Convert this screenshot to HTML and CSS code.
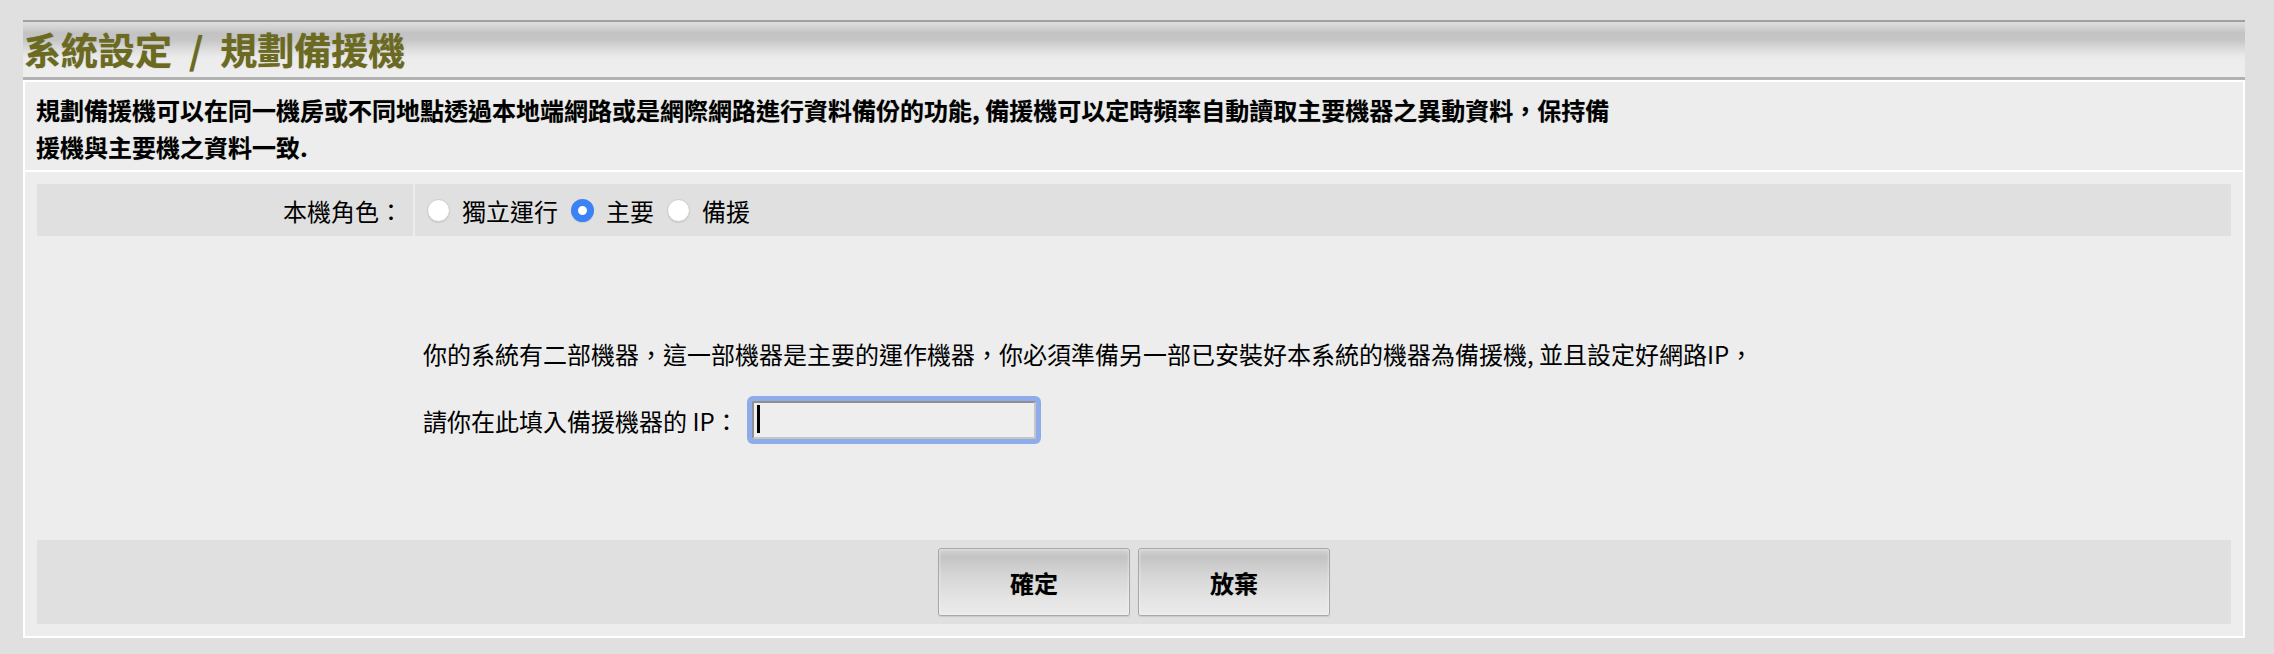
FILE: index.html
```html
<!DOCTYPE html>
<html lang="zh-Hant">
<head>
<meta charset="utf-8">
<title>系統設定 / 規劃備援機</title>
<link rel="stylesheet" href="styles.css">
</head>
<body>
<div class="page">
  <div class="titlebar">
    <h1 class="title">系統設定<span class="sep">/</span>規劃備援機</h1>
  </div>
  <div class="panel">
    <div class="desc">規劃備援機可以在同一機房或不同地點透過本地端網路或是網際網路進行資料備份的功能, 備援機可以定時頻率自動讀取主要機器之異動資料，保持備<br>援機與主要機之資料一致.</div>
    <div class="form">
      <div class="role">
        <div class="cell-label">本機角色：</div>
        <div class="cell-value">
          <label class="opt"><input type="radio" name="role" class="radio">獨立運行</label>
          <label class="opt"><input type="radio" name="role" class="radio" checked>主要</label>
          <label class="opt"><input type="radio" name="role" class="radio">備援</label>
        </div>
      </div>
      <div class="info">
        <p class="msg">你的系統有二部機器，這一部機器是主要的運作機器，你必須準備另一部已安裝好本系統的機器為備援機, 並且設定好網路IP，</p>
        <div class="ip-line">
          <span class="ip-label">請你在此填入備援機器的 IP：</span>
          <span class="ip-wrap"><input type="text" class="ip"><span class="caret"></span></span>
        </div>
      </div>
      <div class="actions">
        <button type="button" class="btn">確定</button>
        <button type="button" class="btn">放棄</button>
      </div>
    </div>
  </div>
</div>
</body>
</html>
```
FILE: styles.css
```css
html, body {
  margin: 0;
  background: #e0e0e0;
  font-family: "Noto Sans CJK TC", "Noto Sans", sans-serif;
  color: #000;
}

.page {
  padding: 20px 29px 0 23px;
}

.titlebar {
  height: 60px;
  box-sizing: border-box;
  border-top: 2px solid #a0a0a0;
  border-bottom: 3px solid #b2b2b2;
  background: linear-gradient(to bottom,
    #dddddd 0px, #d6d6d6 4px, #c3c3c3 11px, #c6c6c6 18px,
    #e2e2e2 30px, #ececec 36px, #eeeeee 100%);
  display: flex;
  align-items: center;
}

.title {
  margin: 0;
  padding-left: 1px;
  font-size: 37px;
  line-height: 1;
  font-weight: 700;
  color: #6c6a20;
  text-shadow: 0 0 1px rgba(40, 40, 0, 0.45);
}

.sep {
  margin: 0 17px;
}

.panel {
  background: #ffffff;
  padding: 2px;
  display: flex;
  flex-direction: column;
  gap: 2px;
}

.desc {
  background: #ededed;
  height: 88px;
  box-sizing: border-box;
  padding: 9px 11px 5px;
  font-size: 24px;
  font-weight: 700;
  line-height: 37px;
  text-shadow: 0 0 1px rgba(0, 0, 0, 0.3);
}

.form {
  background: #ededed;
  padding: 12px;
  display: flex;
  flex-direction: column;
}

.role {
  display: flex;
  height: 52px;
  gap: 2px;
  font-size: 24px;
}

.cell-label {
  width: 376px;
  box-sizing: border-box;
  padding-right: 10px;
  background: #e0e0e0;
  display: flex;
  align-items: center;
  justify-content: flex-end;
}

.cell-value {
  flex: 1;
  background: #e0e0e0;
  display: flex;
  align-items: center;
  padding-left: 12px;
}

.opt {
  display: flex;
  align-items: center;
  margin-right: 13px;
}

.radio {
  appearance: none;
  -webkit-appearance: none;
  width: 23px;
  height: 23px;
  margin: 0 12px 0 0;
  border-radius: 50%;
  box-sizing: border-box;
  background: #ffffff;
  border: 1px solid #c9c9c9;
  box-shadow: 0 1px 1px rgba(0, 0, 0, 0.08);
}

.radio:checked {
  border: 7px solid #3a82f6;
  background: #ffffff;
}

.info {
  height: 304px;
  box-sizing: border-box;
  padding: 3px 0 0 386px;
  display: flex;
  flex-direction: column;
  justify-content: center;
  font-size: 24px;
}

.msg {
  margin: 0 0 21px;
  line-height: 40px;
}

.ip-line {
  display: flex;
  align-items: center;
  height: 50px;
}

.ip-wrap {
  position: relative;
  display: inline-flex;
  margin-left: 13px;
}

.ip {
  width: 284px;
  height: 38px;
  box-sizing: border-box;
  padding: 0;
  border: 2px solid;
  border-color: #8f8f8f #c6c6c6 #c6c6c6 #8f8f8f;
  border-radius: 2px;
  background: #eeeeee;
  outline: none;
  box-shadow: 0 0 0 5px #8eace9;
}

.caret {
  position: absolute;
  left: 5px;
  top: 4px;
  width: 3px;
  height: 28px;
  background: #000;
}

.actions {
  height: 84px;
  background: #e0e0e0;
  display: flex;
  justify-content: center;
  align-items: center;
  gap: 8px;
}

.btn {
  width: 192px;
  height: 68px;
  padding: 0;
  font-family: "Noto Sans CJK TC", "Noto Sans", sans-serif;
  font-size: 24px;
  font-weight: 700;
  color: #000;
  border: 1px solid #a8a8a8;
  border-radius: 3px;
  background: linear-gradient(to bottom,
    #d2d2d2 0%, #c4c4c4 12%, #d6d6d6 40%, #e4e4e4 75%, #ebebeb 100%);
  box-shadow: inset 0 0 3px rgba(255, 255, 255, 0.7), 0 1px 1px rgba(0, 0, 0, 0.1);
  text-shadow: 0 0 1px rgba(0, 0, 0, 0.3);
}
```
